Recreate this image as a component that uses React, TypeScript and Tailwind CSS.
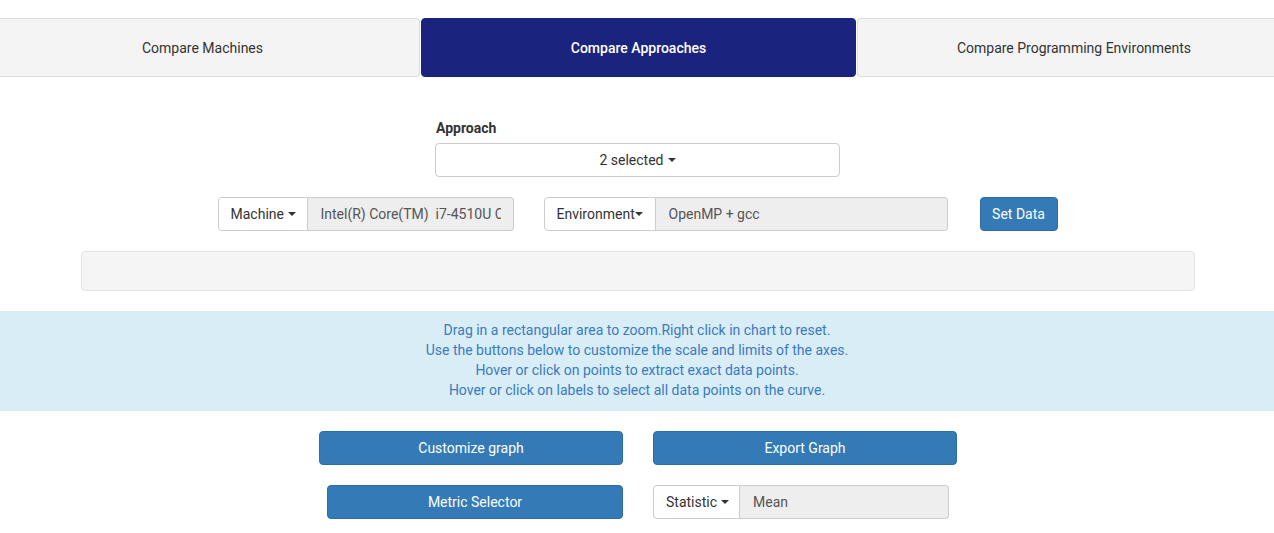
import React from "react";

const Caret: React.FC<{ className?: string }> = ({ className = "" }) => (
	<span
		className={`inline-block w-0 h-0 align-middle border-t-[4px] border-t-[#333] border-x-[4px] border-x-transparent ${className}`}
	/>
);

const Tab: React.FC<{ label: string; active?: boolean; className?: string }> = ({
	label,
	active,
	className = "",
}) => (
	<div
		className={`h-[59px] flex items-center justify-center rounded-[4px] border text-[14px] ${
			active
				? "bg-[#1a237e] border-[#1a237e] text-white font-medium"
				: "bg-[#f4f4f4] border-[#dddddd] text-[#333]"
		} ${className}`}
	>
		{label}
	</div>
);

const InputGroup: React.FC<{
	addon: string;
	value: string;
	addonW: string;
	inputW: string;
	spaced?: boolean;
}> = ({ addon, value, addonW, inputW, spaced = true }) => (
	<div className="flex h-[34px] text-[14px]">
		<div
			className={`${addonW} flex items-center pl-[12px] bg-white border border-[#ccc] rounded-l-[4px] text-[#333] whitespace-nowrap`}
		>
			<span>{addon}</span>
			<Caret className={spaced ? "ml-[4px]" : ""} />
		</div>
		<div
			className={`${inputW} flex items-center pl-[13px] pr-[12px] bg-[#eeeeee] border border-l-0 border-[#ccc] rounded-r-[4px] text-[#555] overflow-hidden`}
		>
			<span className="block w-full overflow-hidden whitespace-pre">{value}</span>
		</div>
	</div>
);

const BlueButton: React.FC<{ label: string; className?: string }> = ({ label, className = "" }) => (
	<button
		className={`h-[34px] bg-[#337ab7] border border-[#2e6da4] rounded-[4px] text-white text-[14px] ${className}`}
	>
		{label}
	</button>
);

export default function App() {
	return (
		<div
			className="w-[1274px] min-h-[533px] bg-white text-[#333] text-[14px] leading-[20px]"
			style={{ fontFamily: "Roboto, 'Liberation Sans', sans-serif" }}
		>
			<div className="pt-[18px] flex gap-[1px]">
				<Tab label="Compare Machines" className="w-[420px] pr-[14px] rounded-l-none border-l-0" />
				<Tab label="Compare Approaches" active className="w-[435px]" />
				<Tab label="Compare Programming Environments" className="flex-1 pl-[16px] rounded-r-none border-r-0" />
			</div>

			<div className="flex justify-center mt-[41px]">
				<div className="w-[406px] pl-[1px]">
					<div className="font-bold mb-[5px] pl-[1px]">Approach</div>
					<button className="w-full h-[34px] bg-white border border-[#ccc] rounded-[4px] text-[#333] flex items-center justify-center">
						2 selected
						<Caret className="ml-[4px]" />
					</button>
				</div>
			</div>

			<div className="flex justify-center mt-[20px] pl-[1px]">
				<InputGroup
					addon="Machine"
					value="Intel(R) Core(TM)  i7-4510U CPU @ 2.00GHz"
					addonW="w-[90px]"
					inputW="w-[206px]"
				/>
				<div className="ml-[30px]">
					<InputGroup
						addon="Environment"
						value="OpenMP + gcc"
						addonW="w-[112px]"
						inputW="w-[292px]"
						spaced={false}
					/>
				</div>
				<BlueButton label="Set Data" className="ml-[32px] w-[78px]" />
			</div>

			<div className="flex justify-center mt-[20px] pl-[1px]">
				<div className="w-[1114px] h-[40px] bg-[#f5f5f5] border border-[#e3e3e3] rounded-[4px]" />
			</div>

			<div className="mt-[20px] bg-[#d9edf7] pt-[9px] pb-[11px] text-center text-[#3a7bc0]">
				<p>Drag in a rectangular area to zoom.Right click in chart to reset.</p>
				<p>Use the buttons below to customize the scale and limits of the axes.</p>
				<p>Hover or click on points to extract exact data points.</p>
				<p>Hover or click on labels to select all data points on the curve.</p>
			</div>

			<div className="flex justify-center gap-[30px] mt-[20px] pl-[2px]">
				<BlueButton label="Customize graph" className="w-[304px]" />
				<BlueButton label="Export Graph" className="w-[304px]" />
			</div>

			<div className="flex mt-[20px]">
				<div className="w-[623px] flex justify-end">
					<BlueButton label="Metric Selector" className="w-[296px]" />
				</div>
				<div className="ml-[30px]">
					<InputGroup addon="Statistic" value="Mean" addonW="w-[87px]" inputW="w-[209px]" />
				</div>
			</div>
		</div>
	);
}
